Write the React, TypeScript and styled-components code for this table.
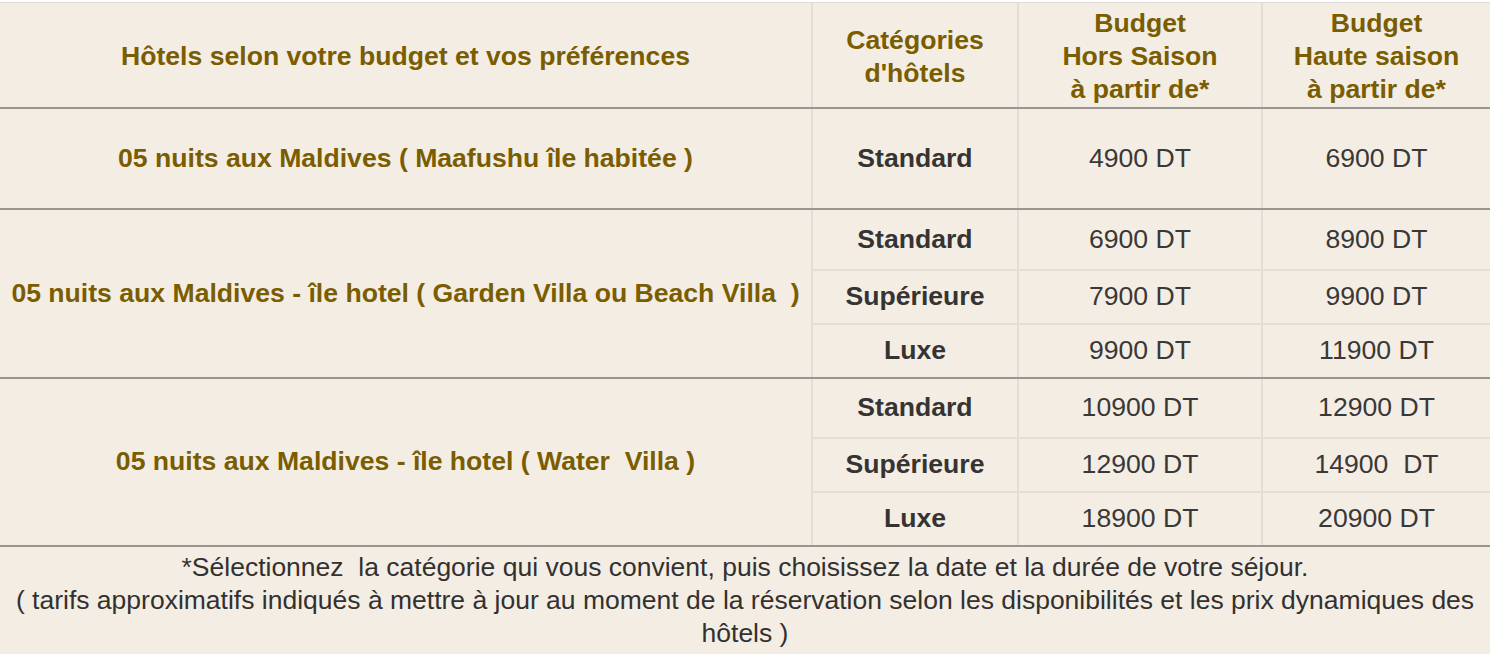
import styled, { createGlobalStyle } from 'styled-components';

const GlobalStyle = createGlobalStyle`
  html, body {
    margin: 0;
    padding: 0;
    background: #f4ede4;
  }
  body {
    font-family: "Liberation Sans", Arial, sans-serif;
  }
`;

const Page = styled.div`
  width: 1490px;
  height: 654px;
  overflow: hidden;
  background: #f4ede4;
  border-top: 2px solid #ffffff;
`;

const Table = styled.table`
  width: 1490px;
  border-collapse: collapse;
  table-layout: fixed;
  border-top: 1px solid #dcd9d6;
`;

const HeadCell = styled.th`
  color: #7a5d00;
  font-size: 26.6px;
  font-weight: bold;
  line-height: 33px;
  text-align: center;
  vertical-align: middle;
  padding: 4px 0 0;
  border-left: 2px solid #e2ddd7;
  border-bottom: 2px solid #9b9591;
  &:first-child {
    border-left: none;
  }
`;

const HeadRow = styled.tr`
  height: 105px;
`;

const Row = styled.tr<{ $h: number; $last?: boolean }>`
  height: ${(p) => p.$h}px;
  & > td {
    border-bottom: ${(p) => (p.$last ? '2px solid #9b9591' : '2px solid #e4ded7')};
  }
`;

const TitleCell = styled.td`
  color: #7a5d00;
  font-size: 26.6px;
  font-weight: bold;
  text-align: center;
  vertical-align: middle;
  padding: 0;
  white-space: pre;
  && {
    border-bottom: 2px solid #9b9591;
  }
`;

const CategoryCell = styled.td`
  color: #363432;
  font-size: 26.6px;
  font-weight: bold;
  text-align: center;
  vertical-align: middle;
  padding: 0;
  border-left: 2px solid #e2ddd7;
`;

const PriceCell = styled.td`
  color: #3a3837;
  font-size: 26.6px;
  text-align: center;
  vertical-align: middle;
  padding: 0;
  white-space: pre;
  border-left: 2px solid #e2ddd7;
`;

const Footer = styled.div`
  color: #333130;
  font-size: 26.5px;
  line-height: 33px;
  text-align: center;
  padding: 4px 6px 0;
  white-space: pre-wrap;
`;

type Offer = {
  title: string;
  rows: { cat: string; low: string; high: string }[];
  heights: number[];
};

const offers: Offer[] = [
  {
    title: '05 nuits aux Maldives ( Maafushu île habitée )',
    rows: [{ cat: 'Standard', low: '4900 DT', high: '6900 DT' }],
    heights: [101],
  },
  {
    title: '05 nuits aux Maldives - île hotel ( Garden Villa ou Beach Villa  )',
    rows: [
      { cat: 'Standard', low: '6900 DT', high: '8900 DT' },
      { cat: 'Supérieure', low: '7900 DT', high: '9900 DT' },
      { cat: 'Luxe', low: '9900 DT', high: '11900 DT' },
    ],
    heights: [61, 54, 54],
  },
  {
    title: '05 nuits aux Maldives - île hotel ( Water  Villa )',
    rows: [
      { cat: 'Standard', low: '10900 DT', high: '12900 DT' },
      { cat: 'Supérieure', low: '12900 DT', high: '14900  DT' },
      { cat: 'Luxe', low: '18900 DT', high: '20900 DT' },
    ],
    heights: [60, 54, 54],
  },
];

export default function App() {
  return (
    <Page>
      <GlobalStyle />
      <Table>
        <colgroup>
          <col style={{ width: 812 }} />
          <col style={{ width: 206 }} />
          <col style={{ width: 244 }} />
          <col style={{ width: 228 }} />
        </colgroup>
        <thead>
          <HeadRow>
            <HeadCell>Hôtels selon votre budget et vos préférences</HeadCell>
            <HeadCell>
              Catégories
              <br />
              d'hôtels
            </HeadCell>
            <HeadCell>
              Budget
              <br />
              Hors Saison
              <br />à partir de*
            </HeadCell>
            <HeadCell>
              Budget
              <br />
              Haute saison
              <br />à partir de*
            </HeadCell>
          </HeadRow>
        </thead>
        <tbody>
          {offers.map((offer) =>
            offer.rows.map((r, i) => (
              <Row
                key={offer.title + r.cat}
                $h={offer.heights[i]}
                $last={i === offer.rows.length - 1}
              >
                {i === 0 && (
                  <TitleCell rowSpan={offer.rows.length}>{offer.title}</TitleCell>
                )}
                <CategoryCell>{r.cat}</CategoryCell>
                <PriceCell>{r.low}</PriceCell>
                <PriceCell>{r.high}</PriceCell>
              </Row>
            ))
          )}
        </tbody>
      </Table>
      <Footer>
        {'*Sélectionnez  la catégorie qui vous convient, puis choisissez la date et la durée de votre séjour.'}
        <br />
        {'( tarifs approximatifs indiqués à mettre à jour au moment de la réservation selon les disponibilités et les prix dynamiques des hôtels )'}
      </Footer>
    </Page>
  );
}
